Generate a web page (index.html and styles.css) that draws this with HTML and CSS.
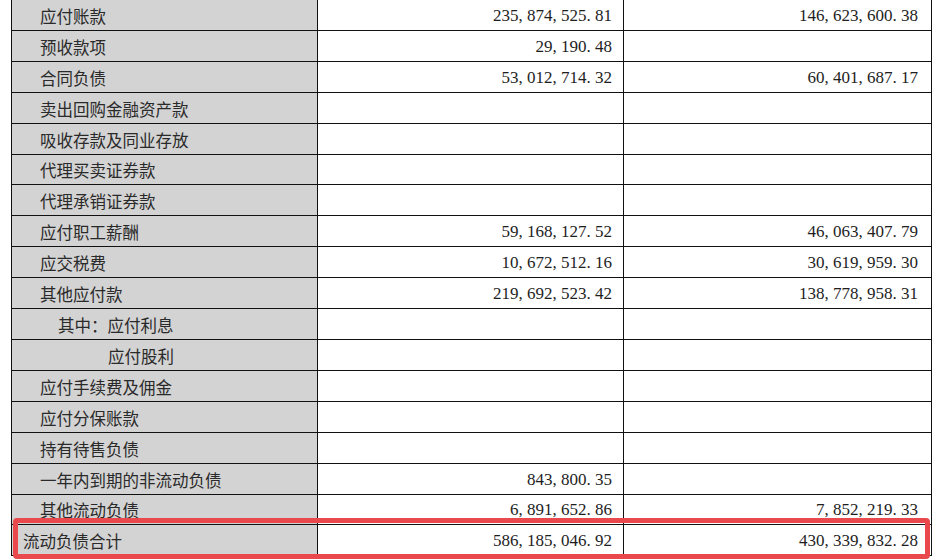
FILE: index.html
```html
<!DOCTYPE html>
<html lang="zh">
<head>
<meta charset="utf-8">
<title>流动负债</title>
<link rel="stylesheet" href="styles.css">
</head>
<body>
<div class="sheet">
  <table class="fin">
    <colgroup><col class="c-label"><col class="c-num"><col class="c-num2"></colgroup>
    <tbody>
      <tr><td class="label">应付账款</td><td class="num">235, 874, 525. 81</td><td class="num last">146, 623, 600. 38</td></tr>
      <tr><td class="label">预收款项</td><td class="num">29, 190. 48</td><td class="num last"></td></tr>
      <tr><td class="label">合同负债</td><td class="num">53, 012, 714. 32</td><td class="num last">60, 401, 687. 17</td></tr>
      <tr><td class="label">卖出回购金融资产款</td><td class="num"></td><td class="num last"></td></tr>
      <tr><td class="label">吸收存款及同业存放</td><td class="num"></td><td class="num last"></td></tr>
      <tr><td class="label">代理买卖证券款</td><td class="num"></td><td class="num last"></td></tr>
      <tr><td class="label">代理承销证券款</td><td class="num"></td><td class="num last"></td></tr>
      <tr><td class="label">应付职工薪酬</td><td class="num">59, 168, 127. 52</td><td class="num last">46, 063, 407. 79</td></tr>
      <tr><td class="label">应交税费</td><td class="num">10, 672, 512. 16</td><td class="num last">30, 619, 959. 30</td></tr>
      <tr><td class="label">其他应付款</td><td class="num">219, 692, 523. 42</td><td class="num last">138, 778, 958. 31</td></tr>
      <tr><td class="label sub">其中：应付利息</td><td class="num"></td><td class="num last"></td></tr>
      <tr><td class="label sub2">应付股利</td><td class="num"></td><td class="num last"></td></tr>
      <tr><td class="label">应付手续费及佣金</td><td class="num"></td><td class="num last"></td></tr>
      <tr><td class="label">应付分保账款</td><td class="num"></td><td class="num last"></td></tr>
      <tr><td class="label">持有待售负债</td><td class="num"></td><td class="num last"></td></tr>
      <tr><td class="label">一年内到期的非流动负债</td><td class="num">843, 800. 35</td><td class="num last"></td></tr>
      <tr><td class="label">其他流动负债</td><td class="num">6, 891, 652. 86</td><td class="num last">7, 852, 219. 33</td></tr>
      <tr><td class="label total">流动负债合计</td><td class="num">586, 185, 046. 92</td><td class="num last">430, 339, 832. 28</td></tr>
    </tbody>
  </table>
  <div class="highlight"></div>
</div>
</body>
</html>
```

FILE: styles.css
```css
html, body {
  margin: 0;
  padding: 0;
  background: #ffffff;
  overflow: hidden;
}

.sheet {
  position: relative;
  width: 936px;
  height: 560px;
  padding-left: 11px;
  box-sizing: border-box;
}

.fin {
  border-collapse: collapse;
  table-layout: fixed;
  width: 920px;
  margin-top: -1px;
  color: #1e1e1e;
}

.c-label { width: 306px; }
.c-num { width: 306px; }
.c-num2 { width: 308px; }

.fin tr {
  height: 30.92px;
}

.fin td {
  border: 1px solid #111;
  padding: 2px 0 0 0;
  white-space: nowrap;
  overflow: hidden;
  vertical-align: middle;
  line-height: 20px;
}

.label {
  background: #d3d3d3;
  font-family: "Noto Sans CJK SC", "Noto Sans", sans-serif;
  font-size: 16.5px;
  padding-left: 28px !important;
  color: #2a2a2a;
}

.label.sub {
  padding-left: 46px !important;
}

.label.sub2 {
  padding-left: 96px !important;
}

.label.total {
  padding-left: 11px !important;
}

.num {
  text-align: right;
  font-family: "Liberation Serif", "Times New Roman", serif;
  font-size: 17px;
  padding-right: 11px !important;
  color: #1e1e1e;
}

.num.last {
  padding-right: 13px !important;
}

.highlight {
  position: absolute;
  left: 13px;
  top: 519px;
  width: 917px;
  height: 41px;
  border: 5px solid #e9494c;
  border-radius: 4px;
  box-sizing: border-box;
  pointer-events: none;
}
```
